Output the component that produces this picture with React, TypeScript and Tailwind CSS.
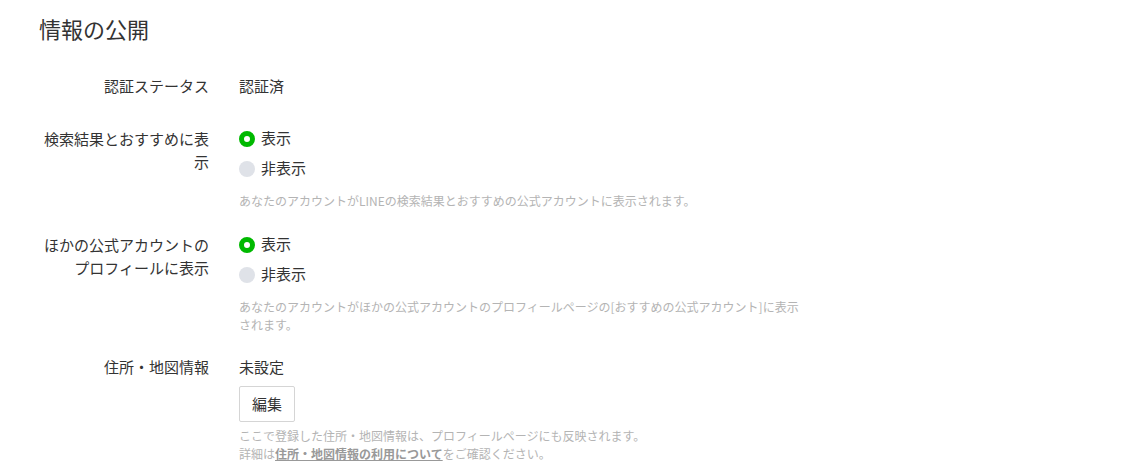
import { ReactNode } from 'react'

const font = { fontFamily: '"Noto Sans CJK JP", "Noto Sans", sans-serif' }

const Radio = ({ label, checked }: { label: string; checked?: boolean }) => (
  <label className="flex items-center h-[23px] cursor-pointer">
    {checked ? (
      <span className="w-4 h-4 rounded-full border-[5px] border-[#00b900] bg-white flex-shrink-0" />
    ) : (
      <span className="w-4 h-4 rounded-full bg-[#dfe2e8] flex-shrink-0" />
    )}
    <span className="ml-[6px] text-[15px] text-[#333]">{label}</span>
  </label>
)

const Help = ({ children }: { children: ReactNode }) => (
  <p className="text-[12px] leading-[18px] text-[#b4b4b4] max-w-[562px]">{children}</p>
)

const Row = ({ label, children, className }: { label: ReactNode; children: ReactNode; className?: string }) => (
  <div className={`flex ${className ?? ''}`}>
    <div className="w-[170px] flex-shrink-0 text-right text-[15px] leading-[23px] text-[#333]">{label}</div>
    <div className="ml-[30px] flex-1 min-w-0">{children}</div>
  </div>
)

const App = () => {
  return (
    <div className="min-h-[474px] bg-white pl-[39px] pt-[12px]" style={font}>
      <h1 className="text-[22px] leading-[33px] text-[#333] font-normal">情報の公開</h1>

      <div className="mt-[29px]">
        <Row label="認証ステータス" className="mb-[30px]">
          <div className="text-[15px] leading-[23px] text-[#333]">認証済</div>
        </Row>

        <Row label="検索結果とおすすめに表示" className="mb-[23px]">
          <div className="flex flex-col gap-[7px]">
            <Radio label="表示" checked />
            <Radio label="非表示" />
          </div>
          <div className="mt-[12px]">
            <Help>あなたのアカウントがLINEの検索結果とおすすめの公式アカウントに表示されます。</Help>
          </div>
        </Row>

        <Row
          label={
            <>
              ほかの公式アカウントの
              <br />
              プロフィールに表示
            </>
          }
          className="mb-[21px]"
        >
          <div className="flex flex-col gap-[7px]">
            <Radio label="表示" checked />
            <Radio label="非表示" />
          </div>
          <div className="mt-[12px]">
            <Help>
              あなたのアカウントがほかの公式アカウントのプロフィールページの[おすすめの公式アカウント]に表示されます。
            </Help>
          </div>
        </Row>

        <Row label="住所・地図情報">
          <div className="text-[15px] leading-[23px] text-[#333]">未設定</div>
          <button className="mt-[8px] h-[36px] w-[56px] border border-[#d5d5d5] bg-white text-[15px] text-[#333] rounded-[2px]">
            編集
          </button>
          <div className="mt-[5px]">
            <Help>
              ここで登録した住所・地図情報は、プロフィールページにも反映されます。
              <br />
              詳細は
              <a href="#" className="font-bold underline text-[#999]">
                住所・地図情報の利用について
              </a>
              をご確認ください。
            </Help>
          </div>
        </Row>
      </div>
    </div>
  )
}

export default App
